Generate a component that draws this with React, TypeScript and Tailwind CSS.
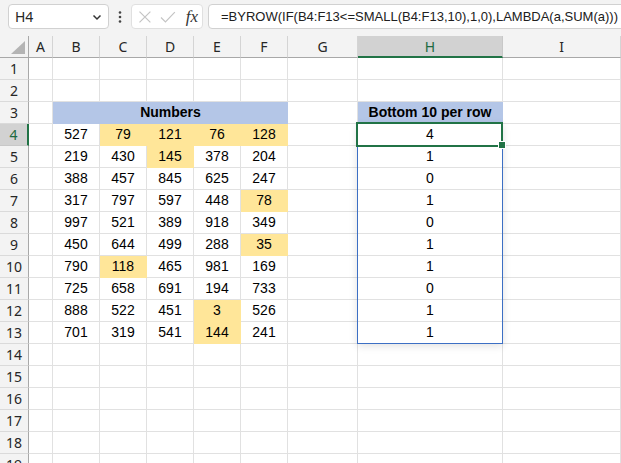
import React from 'react';

const cols = ['A', 'B', 'C', 'D', 'E', 'F', 'G', 'H', 'I'];

const data: number[][] = [
  [527, 79, 121, 76, 128],
  [219, 430, 145, 378, 204],
  [388, 457, 845, 625, 247],
  [317, 797, 597, 448, 78],
  [997, 521, 389, 918, 349],
  [450, 644, 499, 288, 35],
  [790, 118, 465, 981, 169],
  [725, 658, 691, 194, 733],
  [888, 522, 451, 3, 526],
  [701, 319, 541, 144, 241],
];

const results = [4, 1, 0, 1, 0, 1, 1, 0, 1, 1];

// cells that are among the 10 smallest values
const hits: Record<number, number[]> = {
  0: [1, 2, 3, 4],
  1: [2],
  3: [4],
  5: [4],
  6: [1],
  8: [3],
  9: [3],
};

const cell = 'h-[22px] border-r border-b border-[#e1e1e1] flex items-center justify-center';

const RowHead: React.FC<{ n: number }> = ({ n }) =>
  n === 4 ? (
    <div className="h-[22px] bg-[#d2d2d2] border-r-2 border-r-[#217346] border-b border-b-[#c8c8c8] flex items-center justify-center font-['Noto_Sans',sans-serif] text-[14px] text-[#1d6a40]">
      {n}
    </div>
  ) : (
    <div className="h-[22px] bg-[#f3f3f3] border-r border-r-[#a8a8a8] border-b border-b-[#dadada] flex items-center justify-center font-['Noto_Sans',sans-serif] text-[14px] text-[#262626]">
      {n}
    </div>
  );

const App: React.FC = () => {
  const rows = Array.from({ length: 19 }, (_, i) => i + 1);

  return (
    <div className="w-[621px] h-[463px] overflow-hidden bg-white font-['Liberation_Sans',Arial,sans-serif] text-black">
      {/* formula bar */}
      <div className="h-[36px] bg-[#f3f3f3] flex items-start pt-[4px] pl-[8px] overflow-hidden">
        <div className="shrink-0 w-[101px] h-[25px] bg-white border border-[#d1d1d1] rounded-[4px] flex items-center justify-between pl-[6px] pr-[6px] font-['Noto_Sans',sans-serif] text-[14px] text-[#262626]">
          <span>H4</span>
          <svg width="10" height="10" viewBox="0 0 10 10">
            <path d="M1.5 3.5 L5 7 L8.5 3.5" fill="none" stroke="#333" strokeWidth="1.5" />
          </svg>
        </div>
        <div className="shrink-0 w-[22px] h-[25px] flex items-center justify-center">
          <svg width="4" height="14" viewBox="0 0 4 14">
            <circle cx="2" cy="2.5" r="1.3" fill="#444" />
            <circle cx="2" cy="7" r="1.3" fill="#444" />
            <circle cx="2" cy="11.5" r="1.3" fill="#444" />
          </svg>
        </div>
        <div className="shrink-0 w-[72px] h-[25px] bg-white border border-[#e0e0e0] rounded-[4px] flex items-center pl-[6px] pr-[4px] gap-[8px]">
          <svg width="14" height="14" viewBox="0 0 14 14">
            <path d="M1.5 1.5 L12.5 12.5 M12.5 1.5 L1.5 12.5" stroke="#c4c4c4" strokeWidth="1.2" fill="none" />
          </svg>
          <svg width="16" height="14" viewBox="0 0 16 14">
            <path d="M1 7.5 L5.5 12 L15 2" stroke="#c4c4c4" strokeWidth="1.2" fill="none" />
          </svg>
          <span className="font-['Liberation_Serif',serif] italic text-[17px] leading-none text-[#333] ml-[2px]">fx</span>
        </div>
        <div className="shrink-0 ml-[5px] w-[430px] h-[25px] bg-white border border-[#d1d1d1] rounded-[4px] flex items-center pl-[12px] text-[13px] text-[#202020] whitespace-nowrap">
          =BYROW(IF(B4:F13&lt;=SMALL(B4:F13,10),1,0),LAMBDA(a,SUM(a)))
        </div>
      </div>

      {/* sheet */}
      <div className="relative">
        <div className="grid grid-cols-[29px_24px_47px_47px_47px_47px_47px_70px_145px_1fr]">
          {/* column headers */}
          <div className="h-[22px] bg-[#f3f3f3] border-r border-r-[#a8a8a8] border-b border-b-[#a8a8a8] relative">
            <svg className="absolute left-[11px] top-[5px]" width="14" height="13" viewBox="0 0 14 13">
              <path d="M14 0 L14 13 L0 13 Z" fill="#b4b4b4" />
            </svg>
          </div>
          {cols.map((c) =>
            c === 'H' ? (
              <div
                key={c}
                className="h-[22px] bg-[#d2d2d2] border-r border-r-[#c8c8c8] border-b-2 border-b-[#217346] flex items-center justify-center font-['Noto_Sans',sans-serif] text-[14px] text-[#1d6a40]"
              >
                {c}
              </div>
            ) : (
              <div
                key={c}
                className="h-[22px] bg-[#f3f3f3] border-r border-r-[#d4d4d4] border-b border-b-[#a8a8a8] flex items-center justify-center font-['Noto_Sans',sans-serif] text-[14px] text-[#262626]"
              >
                {c}
              </div>
            )
          )}

          {rows.map((r) => {
            const di = r - 4;
            const inData = di >= 0 && di < 10;
            return (
              <React.Fragment key={r}>
                <RowHead n={r} />
                <div className={cell} />
                {r === 3 ? (
                  <div className="col-span-5 h-[22px] bg-[#b4c6e7] border-b border-b-[#b4c6e7] flex items-center justify-center font-bold text-[14px]">
                    Numbers
                  </div>
                ) : (
                  [0, 1, 2, 3, 4].map((ci) => {
                    const hot = inData && hits[di]?.includes(ci);
                    return (
                      <div
                        key={ci}
                        className={
                          hot
                            ? 'h-[22px] bg-[#ffe699] border-r border-b border-[#ffe699] flex items-center justify-center text-[14px]'
                            : cell + ' text-[14px]'
                        }
                      >
                        {inData ? data[di][ci] : ''}
                      </div>
                    );
                  })
                )}
                <div className={cell} />
                {r === 3 ? (
                  <div className="h-[22px] bg-[#b4c6e7] border-r border-b border-[#b4c6e7] flex items-center justify-center font-bold text-[14px]">
                    Bottom 10 per row
                  </div>
                ) : (
                  <div className={cell + ' text-[14px]'}>{inData ? results[di] : ''}</div>
                )}
                <div className={cell} />
              </React.Fragment>
            );
          })}
        </div>

        {/* spill range border */}
        <div className="absolute left-[357px] top-[87px] w-[146px] h-[221px] border border-[#3c6fc4] shadow-[0_2px_8px_rgba(0,0,0,0.12)] pointer-events-none" />
        {/* active cell */}
        <div className="absolute left-[356px] top-[86px] w-[147px] h-[25px] border-2 border-[#217346] pointer-events-none" />
        <div className="absolute left-[498px] top-[105px] w-[8px] h-[8px] bg-[#217346] border border-white pointer-events-none" />
      </div>
    </div>
  );
};

export default App;
